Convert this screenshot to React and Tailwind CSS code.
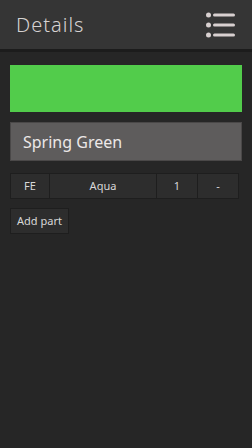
export default function App() {
  return (
    <div className="w-[252px] h-[448px] bg-[#262626] flex flex-col" style={{ fontFamily: '"Noto Sans", "Open Sans", sans-serif' }}>
      <div className="h-[49px] bg-[#353535] flex items-center justify-between pl-[16px] pr-[16px] shrink-0">
        <span className="text-[20px] font-light text-[#d6d2d2] tracking-[1px] leading-none">Details</span>
        <svg width="30" height="28" viewBox="0 0 30 28">
          <g fill="#d8d0d0">
            <circle cx="2.5" cy="4" r="2.5" />
            <circle cx="2.5" cy="14" r="2.5" />
            <circle cx="2.5" cy="24" r="2.5" />
            <rect x="7" y="2.5" width="22" height="3" rx="1.5" />
            <rect x="7" y="12.5" width="22" height="3" rx="1.5" />
            <rect x="7" y="22.5" width="22" height="3" rx="1.5" />
          </g>
        </svg>
      </div>
      <div className="h-[3px] bg-[#1c1c1c] shrink-0" />
      <div className="flex flex-col px-[10px] pt-[13px]">
        <div className="h-[47px] bg-[#52cc4b]" />
        <div className="mt-[10px] h-[39px] bg-[#5e5c5c] border border-[#4a4848] flex items-center pl-[12px]">
          <span className="text-[16px] text-[#ece8e8] leading-none">Spring Green</span>
        </div>
        <div className="mt-[12px] flex h-[26px] w-[229px] text-[11px] text-[#d8d8d8]">
          <div className="w-[40px] bg-[#2d2d2d] border border-[#1e1e1e] flex items-center justify-center">FE</div>
          <div className="w-[107px] bg-[#2d2d2d] border border-[#1e1e1e] border-l-0 flex items-center justify-center">Aqua</div>
          <div className="w-[41px] bg-[#2d2d2d] border border-[#1e1e1e] border-l-0 flex items-center justify-center">1</div>
          <div className="w-[41px] bg-[#2d2d2d] border border-[#1e1e1e] border-l-0 flex items-center justify-center">-</div>
        </div>
        <div className="mt-[9px] self-start h-[26px] w-[59px] bg-[#2d2d2d] border border-[#1e1e1e] flex items-center justify-center text-[11px] text-[#d8d8d8]">
          Add part
        </div>
      </div>
    </div>
  );
}
